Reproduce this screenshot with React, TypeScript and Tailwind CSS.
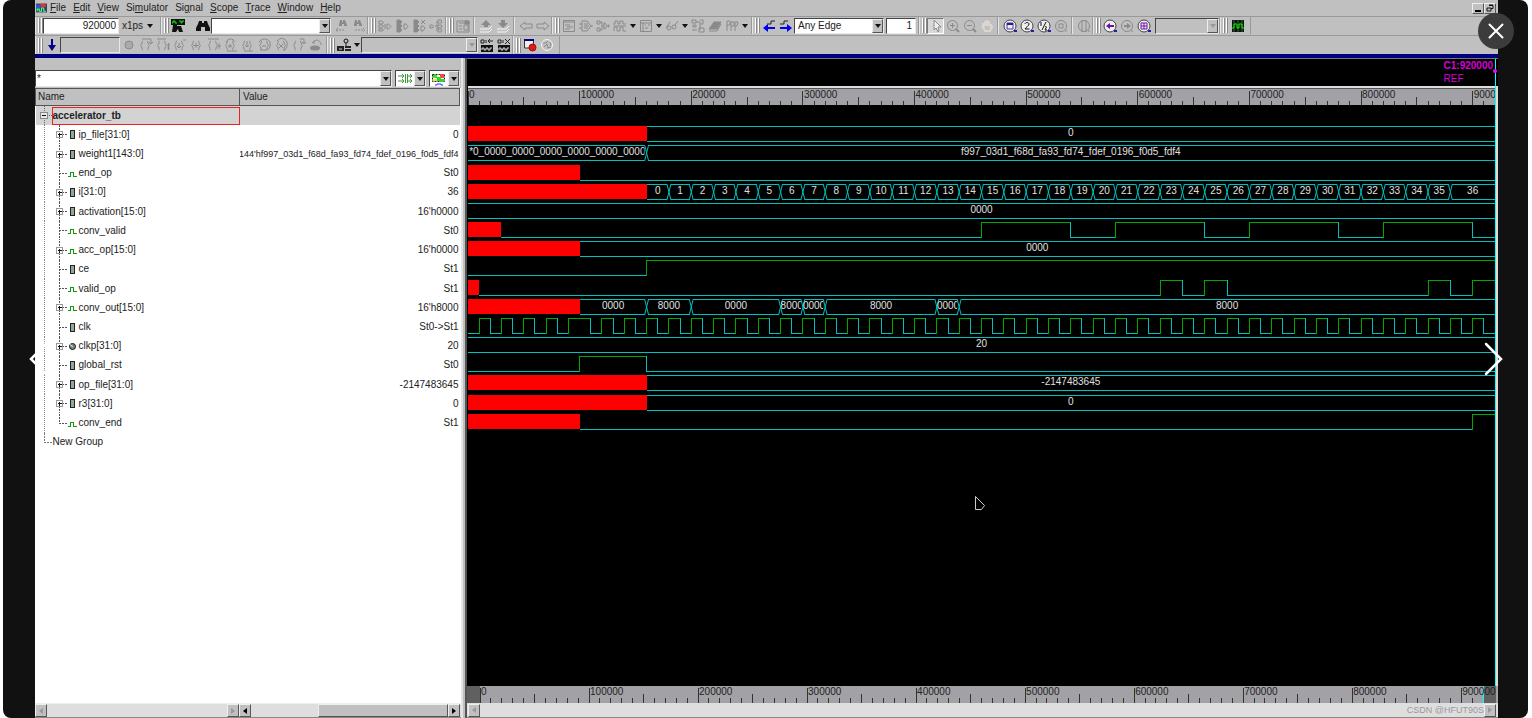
import type { ReactNode } from "react";

const END = 920;
const ROWS = 18;
const LIST_HEIGHT = 345;

const bevel =
  "border border-t-[#eee] border-l-[#eee] border-r-[#555] border-b-[#555] bg-[#c0c0c0]";
const sunken =
  "border-t border-l border-t-[#444] border-l-[#444] border-r border-b border-r-[#e8e8e8] border-b-[#e8e8e8]";

const pct = (t: number) => `${(t / END) * 100}%`;

/* ---------- toolbar icons ---------- */

const lens = (
  <>
    <circle cx="6.5" cy="6.5" r="5" />
    <path d="M10 10l3 3" strokeWidth="2" />
  </>
);

const binoculars = (
  <path
    d="M3 2h3v2h2V2h3l1 3 2 4v3H9V8H5v4H0V9l2-4z"
    fill="currentColor"
    stroke="none"
  />
);

const braces = (
  <path d="M4 3C2 3 4 6 1.500 7.500 4 9 2 12 4 12M8 3c2 0 0 3 2.500 4.500C8 9 10 12 8 12" />
);

const icons: Record<string, ReactNode> = {
  waves: (
    <>
      <path d="M0 0h14v6H0zM2 6h4v1h4l2 6H8l-1-3-2 3H1z" fill="#111" stroke="none" />
      <path d="M1 4h1V2h2v2h2M8 2h2v2h1V2h2" stroke="#0f0" />
    </>
  ),
  binoculars,
  findPrev: (
    <>
      <path d="M5 1h2v2h1V1h2l2 5v1H9V5H7v2H4V6z" fill="currentColor" stroke="none" />
      <path d="M1 11h9M3 9l-2 2 2 2" strokeDasharray="2 1" />
    </>
  ),
  findNext: (
    <>
      <path d="M3 1h2v2h1V1h2l2 5v1H7V5H5v2H2V6z" fill="currentColor" stroke="none" />
      <path d="M3 11h9M11 9l2 2-2 2" strokeDasharray="2 1" />
    </>
  ),
  drivers: <path d="M1 2h3l1.500 2L4 5H1zM1 6h3l1.500 1L4 9H1zM1 10h3l1.500 1L4 12H1zM7 5v5M9 5h1.500L13 7.500 10.500 10H9z" />,
  loads: (
    <>
      <path d="M2 1h3l2 2-2 2 2 2-2 2 2 2-2 2H2z" fill="currentColor" />
      <path d="M9 5h2l2 2.500L11 10H9z" />
    </>
  ),
  loadsX: (
    <>
      <path d="M2 1h3l2 2-2 2 2 2-2 2 2 2-2 2H2z" fill="currentColor" />
      <path d="M9 7h2l2 2-2 3H9zM9 1l4 4M13 1L9 5" />
    </>
  ),
  fanIn: <path d="M1 6h2l2 1.500L3 9H1zM6 7h2M8 2v10M9 1h3l1 2-1 1H9zM9 6h3l1 1-1 2H9zM9 10h3l1 1-1 2H9z" />,
  page: (
    <>
      <path d="M1 2h12v11H1zM3 4h6M3 7h3M3 10h3M8 6h4v5H8z" />
      <path d="M9 2h4v3H9z" fill="currentColor" />
    </>
  ),
  up: (
    <>
      <path d="M7 1l5 5H9v2H5V6H2z" fill="currentColor" stroke="none" />
      <path d="M1 10h9l3-3M1 13h9l3-3" stroke="#f4f4f4" />
    </>
  ),
  down: (
    <>
      <path d="M5 1h4v3h3L7 9 2 4h3z" fill="currentColor" stroke="none" />
      <path d="M1 10h9l3-3M1 13h9l3-3" stroke="#f4f4f4" />
    </>
  ),
  back: <path d="M1 7l5-4v2h7v4H6v2z" />,
  forward: <path d="M13 7L8 3v2H1v4h7v2z" />,
  source: <path d="M1.500 1.500h11v11h-11zM1 3h12M3 6h5M5 8h6M3 10h5" />,
  gate: (
    <path d="M3 2h5l4 5-4 5H3zM0 5h3M0 9h3M12 7h2M5 5h4M5 7h5M5 9h4" />
  ),
  path: <path d="M1 2h3v3H1zM1 9h3v3H1zM4 3h2v8H4M6 7h2M8 4h1l2 3-2 3H8zM12 6h1v2h-1z" />,
  wave: <path d="M0 5h2V2h3v3h2V2h3v3h3M1 12V8h3v4h3V8h3v4h3M1 7h12" />,
  list: <path d="M1.500 1.500h11v11h-11zM1 4h12M4 4v8M6 6h1M9 6h2M6 9h3" />,
  glasses: <path d="M1 9l4-6M4 7a2 2 0 1 0 0 4 2 2 0 0 0 0-4M9 6a2 2 0 1 0 0 4 2 2 0 0 0 0-4M10 6l3-4" />,
  schematic: <path d="M1 1h4v3H1zM2 6h3v2H2zM5 3h4v8M9 1h3v4H9M8 9h5v4H8zM1 11h5" />,
  book: (
    <>
      <path d="M1 10l5-7h7l-4 7z" fill="currentColor" />
      <path d="M1 12h8l4-7" />
    </>
  ),
  flags: <path d="M2 12V2M2 2h3v4H2M6 12V3h3v4H6M10 12V3h3l-1 4h-2" />,
  edgeLeft: (
    <>
      <path d="M5 5h4V2h4" stroke="#222" />
      <path d="M1 9l5-4v3h7v2H6v3z" fill="#0000f0" stroke="none" />
    </>
  ),
  edgeRight: (
    <>
      <path d="M1 5h4V2h4" stroke="#222" />
      <path d="M13 9L8 5v3H1v2h7v3z" fill="#0000f0" stroke="none" />
    </>
  ),
  pointer: <path d="M5 1v10l2-2 2 4 1-1-1-4h3z" fill="#eee" />,
  zoomIn: <g>{lens}<path d="M4 6.500h5M6.500 4v5" /></g>,
  zoomOut: <g>{lens}<path d="M4 6.500h5" /></g>,
  hand: (
    <path
      d="M3 8V4M5 7V2M7 7V1M9 7V2M11 9V5M3 8l2 4h5l2-4-1-2H4zM2 7l2 3"
      stroke="#dcd6cf"
      strokeWidth="2"
    />
  ),
  zoomFit: (
    <>
      <circle cx="7" cy="7" r="6" fill="#eee" stroke="#444" />
      <path d="M4 4h6v6H4z" stroke="#4a35b0" />
      <path d="M4 5h6" stroke="#2a1a90" strokeWidth="2" />
      <path d="M11 12h3" stroke="#2020a0" strokeWidth="2" />
    </>
  ),
  zoomTwo: (
    <>
      <circle cx="7" cy="7" r="6" fill="#eee" stroke="#444" />
      <path d="M5 5c0-2 4-2 4 0 0 2-3 3-4 5h4.500" stroke="#111" />
      <path d="M11 12h3" stroke="#2020a0" strokeWidth="2" />
    </>
  ),
  zoomHalf: (
    <>
      <circle cx="7" cy="7" r="6" fill="#eee" stroke="#444" />
      <path d="M4 3v4M9 3l-4 8M8 8c1-1 2 0 1 1l-1 2h2" stroke="#111" />
      <path d="M11 12h3" stroke="#2020a0" strokeWidth="2" />
    </>
  ),
  zoomRegion: (
    <>
      <circle cx="7" cy="7" r="5.500" />
      <path d="M5 5h4v4H5zM11 12h2" />
    </>
  ),
  zoomCursors: (
    <>
      <circle cx="7" cy="7" r="5.500" />
      <path d="M5 1v12M9 1v12M11 12h2" />
    </>
  ),
  zoomPrev: (
    <>
      <circle cx="7" cy="7" r="6" fill="#eee" stroke="#444" />
      <path d="M3 7l4-3v2h4v2H7v2z" fill="#6a12a8" stroke="none" />
      <path d="M11 12h3" stroke="#2020a0" strokeWidth="2" />
    </>
  ),
  zoomNext: (
    <>
      <circle cx="7" cy="7" r="5.500" />
      <path d="M11 7L7 4v2H4v2h3v2z" fill="currentColor" stroke="none" />
      <path d="M11 12h2" />
    </>
  ),
  zoomMark: (
    <>
      <circle cx="7" cy="7" r="6" fill="#eee" stroke="#444" />
      <path d="M4 4h6v6H4zM7 4v6M4 7h6" stroke="#6a12a8" />
      <path d="M11 12h3" stroke="#2020a0" strokeWidth="2" />
    </>
  ),
  grid: (
    <>
      <path d="M1 1h12v12H1z" fill="#111" stroke="none" />
      <path d="M3 1v12M7 1v12M11 1v12" stroke="#2b6b2b" />
      <path d="M1 9h2V5h3v4h2V5h3v4h2" stroke="#0f0" />
    </>
  ),
  arrowDown: (
    <path d="M6 1h2v6h3l-4 6-4-6h3z" fill="#00008c" stroke="none" />
  ),
  stop: <circle cx="7" cy="7" r="4" fill="#aaa" />,
  step1: <g>{braces}<path d="M3 1h9v5M10 4l2 2 2-2" /></g>,
  step2: <g>{braces}<path d="M1 1h9M11 7h3M11 10h3M12.500 5v7" /></g>,
  step3: <g>{braces}<path d="M6 5v5M4 8l2 2 2-2M10 2h3" /></g>,
  step4: <g>{braces}<path d="M6 5v5M3 7.500h6" /></g>,
  step5: <g>{braces}<path d="M1 1h11M12 5v6M10 8h4" /></g>,
  step6: <g>{braces}<path d="M2 4c2-4 7-4 9 0M6 6v4M4 8h4M3 13h10" /></g>,
  step7: <g>{braces}<path d="M6 3v6M4 7l2 2 2-2M3 13h9" /></g>,
  step8: <g>{braces}<path d="M1 4c2-4 9-4 11 0v5c-2 4-8 4-10 2M4 8h4" /></g>,
  step9: <g>{braces}<path d="M2 3c3-4 8-3 10 1v5l-3 4M4 6l4 4M8 6l-4 4" /></g>,
  step10: <g>{braces}<path d="M8 1h4v5M10 4l2 2 2-2" /></g>,
  undo: (
    <>
      <ellipse cx="6" cy="10" rx="5" ry="2.500" fill="currentColor" stroke="none" />
      <path d="M5 6V3l-2 2M5 3c3-2 7 0 7 4" />
    </>
  ),
  machine: (
    <>
      <path d="M0 8h7v5H0zM8 8h6v2H8zM8 11h6v2H8z" fill="#222" stroke="none" />
      <path d="M2 11h3" stroke="#ccc" />
      <circle cx="9" cy="3" r="2" />
      <path d="M9 5v3" stroke="#222" />
    </>
  ),
  bindA: (
    <>
      <path d="M1 7h12v7H1z" fill="#111" stroke="none" />
      <path d="M2 12v-2h2v2h2v-2h2v2h2v-2h2" stroke="#ddd" />
      <path d="M1 2h3v3H1zM6 2v3M13 3H8l2-2M8 3l2 2" stroke="#222" />
    </>
  ),
  bindX: (
    <>
      <path d="M1 7h12v7H1z" fill="#111" stroke="none" />
      <path d="M2 12v-2h2v2h2v-2h2v2h2v-2h2" stroke="#ddd" />
      <path d="M1 2h3v3H1zM6 2v3M8 1l5 5M13 1L8 6" stroke="#222" />
    </>
  ),
  record: (
    <>
      <path d="M1.500 2h9v8h-9z" fill="#eee" stroke="#333" />
      <path d="M1 2h10" stroke="#00008c" strokeWidth="2" />
      <circle cx="9.500" cy="9.500" r="3.500" fill="#e01818" stroke="#a01010" />
    </>
  ),
  clock: (
    <>
      <circle cx="7" cy="7" r="5.500" stroke="#f4f4f4" />
      <path d="M3 5h3l2-2M4 9l3-3 1 4 3-1M10 4l1 4" />
    </>
  ),
};

function Icon({ name }: { name: string }) {
  return (
    <svg
      viewBox="0 0 14 14"
      className="size-3.5"
      fill="none"
      stroke="currentColor"
      aria-hidden="true"
    >
      {icons[name]}
    </svg>
  );
}

function Tool({
  name,
  dim = false,
  pressed = false,
}: {
  name: string;
  dim?: boolean;
  pressed?: boolean;
}) {
  return (
    <button
      type="button"
      aria-label={name}
      className={`flex h-4 w-[17px] shrink-0 items-center justify-center ${
        dim ? "text-[#8a8a8a]" : "text-[#111]"
      } ${pressed ? "border border-t-[#777] border-l-[#777] border-r-white border-b-white bg-[#d8d8d8]" : ""}`}
    >
      <Icon name={name} />
    </button>
  );
}

function Tools({ names }: { names: string[] }) {
  return names.map((name) => <Tool key={name} name={name} dim />);
}

function Caret({ dim = false }: { dim?: boolean }) {
  return (
    <svg viewBox="0 0 6 4" className="h-1 w-1.5" aria-hidden="true">
      <path d="M0 0h6L3 4z" fill={dim ? "#999" : "#111"} />
    </svg>
  );
}

function More() {
  return (
    <button
      type="button"
      aria-label="More"
      className="flex h-4 w-[9px] items-center justify-center"
    >
      <Caret />
    </button>
  );
}

function Sep() {
  return <span className="mx-0.5 h-full w-0.5 border-r border-l border-r-[#e6e6e6] border-l-[#999]" />;
}

function Group({ children, className = "" }: { children: ReactNode; className?: string }) {
  return (
    <div
      className={`flex h-full shrink-0 items-center border-r border-l border-r-[#999] border-l-[#e6e6e6] ${className}`}
    >
      <span className="flex h-[15px] w-[7px] gap-px pl-0.5">
        <span className="w-0.5 border-r border-l border-r-[#888] border-l-white" />
        <span className="w-0.5 border-r border-l border-r-[#888] border-l-white" />
      </span>
      {children}
    </div>
  );
}

function Combo({
  label,
  options,
  className,
  dim = false,
}: {
  label: string;
  options: string[];
  className: string;
  dim?: boolean;
}) {
  return (
    <div className={`relative flex h-4 shrink-0 ${sunken} ${dim ? "bg-[#c0c0c0]" : "bg-white"} ${className}`}>
      <select
        aria-label={label}
        disabled={dim}
        className="w-full min-w-0 appearance-none pl-[3px] outline-none"
      >
        {options.map((option) => (
          <option key={option}>{option}</option>
        ))}
      </select>
      <span
        className={`pointer-events-none absolute inset-y-0 right-0 flex w-[11px] items-center justify-center ${bevel}`}
      >
        <Caret dim={dim} />
      </span>
    </div>
  );
}

/* ---------- menu and toolbars ---------- */

const menus: [string, string, string][] = [
  ["", "F", "ile"],
  ["", "E", "dit"],
  ["", "V", "iew"],
  ["Si", "m", "ulator"],
  ["Si", "g", "nal"],
  ["", "S", "cope"],
  ["", "T", "race"],
  ["", "W", "indow"],
  ["", "H", "elp"],
];

function MenuBar() {
  return (
    <nav className="flex h-[17px] items-center justify-between border-b border-[#999] pr-0.5">
      <div className="flex items-center gap-[7px]">
        <svg viewBox="0 0 10 10" className="-mr-1 size-3 pl-px" aria-hidden="true">
          <path d="M0 1h10v8H0z" fill="#345" />
          <path d="M0 2h4v3H0z" fill="#35d" />
          <path d="M4 1h5v3H4z" fill="#d34" />
          <path d="M1 8V6h2v2h2V5h2v3h2" stroke="#4f8" fill="none" />
        </svg>
        {menus.map(([before, key, after]) => (
          <button type="button" key={key}>
            {before}
            <span className="underline">{key}</span>
            {after}
          </button>
        ))}
      </div>
      <div className="flex">
        <button type="button" aria-label="Minimize" className={`flex h-[11px] w-3 items-end justify-center pb-px ${bevel}`}>
          <span className="h-0.5 w-1.5 bg-black" />
        </button>
        <button type="button" aria-label="Restore" className={`flex h-[11px] w-3 items-center justify-center ${bevel}`}>
          <svg viewBox="0 0 8 8" className="size-2" fill="none" stroke="#111" aria-hidden="true">
            <path d="M3 1.500h4v3H5M1 4h4v3H1zM3 1h4" />
          </svg>
        </button>
      </div>
    </nav>
  );
}

function Toolbars() {
  return (
    <>
      <div className="flex h-[19px] border-b border-[#999] pb-px">
        <Group>
          <input
            aria-label="Time"
            defaultValue="920000"
            className={`h-4 w-[76px] bg-white pr-0.5 text-right outline-none ${sunken}`}
          />
          <button type="button" className="flex w-[41px] items-center gap-1 pl-[3px]">
            x1ps <Caret />
          </button>
        </Group>
        <Group>
          <Tool name="waves" />
          <span className="w-2" />
          <Tool name="binoculars" />
          <Combo label="Find" options={[""]} className="mr-0.5 w-[120px]" />
          <Tools names={["findPrev", "findNext"]} />
        </Group>
        <Group className="pr-px">
          <Tools names={["drivers", "loads", "loadsX", "fanIn"]} />
        </Group>
        <Group>
          <Tools names={["page"]} />
          <Sep />
          <Tools names={["up", "down"]} />
          <Sep />
          <Tools names={["back", "forward"]} />
        </Group>
        <Group className="pr-0.5">
          <Tools names={["source", "gate", "path", "wave"]} />
          <More />
          <Tools names={["list"]} />
          <More />
          <Tools names={["glasses"]} />
          <More />
          <Tools names={["schematic", "book", "flags"]} />
          <More />
        </Group>
        <Group className="pr-0.5">
          <Tool name="edgeLeft" />
          <Tool name="edgeRight" />
          <Combo label="Edge" options={["Any Edge"]} className="mr-0.5 w-[90px]" />
          <input
            aria-label="Edge count"
            defaultValue="1"
            className={`h-4 w-[30px] bg-white pr-[3px] text-right outline-none ${sunken}`}
          />
        </Group>
        <Group>
          <Tool name="pointer" dim pressed />
          <Tools names={["zoomIn", "zoomOut", "hand"]} />
          <Sep />
          <Tool name="zoomFit" />
          <Tool name="zoomTwo" />
          <Tool name="zoomHalf" />
          <Tool name="zoomRegion" dim />
          <Sep />
          <Tool name="zoomCursors" dim />
        </Group>
        <Group>
          <Tool name="zoomPrev" />
          <Tool name="zoomNext" dim />
          <Tool name="zoomMark" />
          <Combo label="Zoom range" options={[""]} className="ml-[3px] w-16" dim />
        </Group>
        <Group className="pr-1">
          <span className="w-px" />
          <Tool name="grid" />
        </Group>
      </div>
      <div className="flex h-[18px]">
        <Group className="pr-0.5">
          <Tool name="arrowDown" />
          <input aria-label="Step" disabled className={`h-4 w-[60px] bg-[#c0c0c0] ${sunken}`} />
          <Tools
            names={[
              "stop",
              "step1",
              "step2",
              "step3",
              "step4",
              "step5",
              "step6",
              "step7",
              "step8",
              "step9",
              "step10",
              "undo",
            ]}
          />
        </Group>
        <Group>
          <Tool name="machine" />
          <More />
          <Combo label="Scope" options={[""]} className="w-[117px]" dim />
          <Tool name="bindA" />
          <Tool name="bindX" />
        </Group>
        <Group className="pr-1">
          <Tool name="record" />
          <Tool name="clock" dim />
        </Group>
      </div>
      <div className="h-1 bg-[#000080]" />
    </>
  );
}

/* ---------- signals ---------- */

type Kind = "reg" | "net" | "param";
type Level = "x" | "lo" | "hi";
type Seg = [from: number, value: string];

type Signal = {
  name: string;
  kind: Kind;
  value: string;
  bus?: boolean;
  // each segment runs until the next one starts, or to END
  wave: Seg[];
};

const counter: Seg[] = Array.from({ length: 37 }, (_, i) => [160 + i * 20, `${i}`]);

const clock: Seg[] = [
  [0, "lo"],
  ...[10, 30, 50, 70].flatMap((t): Seg[] => [
    [t, "hi"],
    [t + 10, "lo"],
  ]),
  [90, "hi"],
  [110, "lo"],
  ...Array.from({ length: 40 }, (_, i) => 120 + i * 20).flatMap((t): Seg[] => [
    [t, "hi"],
    [t + 10, "lo"],
  ]),
];

const weights = "f997_03d1_f68d_fa93_fd74_fdef_0196_f0d5_fdf4";

const signals: Signal[] = [
  { name: "ip_file[31:0]", kind: "reg", value: "0", bus: true, wave: [[0, "x"], [160, "0"]] },
  {
    name: "weight1[143:0]",
    kind: "reg",
    value: `144'h${weights}`,
    bus: true,
    wave: [[0, "*0_0000_0000_0000_0000_0000_0000"], [160, weights]],
  },
  { name: "end_op", kind: "net", value: "St0", wave: [[0, "x"], [100, "lo"]] },
  { name: "i[31:0]", kind: "reg", value: "36", bus: true, wave: [[0, "x"], ...counter] },
  { name: "activation[15:0]", kind: "reg", value: "16'h0000", bus: true, wave: [[0, "0000"]] },
  {
    name: "conv_valid",
    kind: "net",
    value: "St0",
    wave: [[0, "x"], [30, "lo"], [460, "hi"], [540, "lo"], [580, "hi"], [660, "lo"], [700, "hi"], [780, "lo"], [820, "hi"], [900, "lo"]],
  },
  { name: "acc_op[15:0]", kind: "net", value: "16'h0000", bus: true, wave: [[0, "x"], [100, "0000"]] },
  { name: "ce", kind: "reg", value: "St1", wave: [[0, "lo"], [160, "hi"]] },
  {
    name: "valid_op",
    kind: "net",
    value: "St1",
    wave: [[0, "x"], [10, "lo"], [620, "hi"], [640, "lo"], [660, "hi"], [680, "lo"], [860, "hi"], [880, "lo"], [900, "hi"]],
  },
  {
    name: "conv_out[15:0]",
    kind: "net",
    value: "16'h8000",
    bus: true,
    wave: [[0, "x"], [100, "0000"], [160, "8000"], [200, "0000"], [280, "8000"], [300, "0000"], [320, "8000"], [420, "0000"], [440, "8000"]],
  },
  { name: "clk", kind: "reg", value: "St0->St1", wave: clock },
  { name: "clkp[31:0]", kind: "param", value: "20", bus: true, wave: [[0, "20"]] },
  { name: "global_rst", kind: "reg", value: "St0", wave: [[0, "lo"], [100, "hi"], [160, "lo"]] },
  { name: "op_file[31:0]", kind: "reg", value: "-2147483645", bus: true, wave: [[0, "x"], [160, "-2147483645"]] },
  { name: "r3[31:0]", kind: "reg", value: "0", bus: true, wave: [[0, "x"], [160, "0"]] },
  { name: "conv_end", kind: "net", value: "St1", wave: [[0, "x"], [100, "lo"], [900, "hi"]] },
];

function Branch({ signal, last }: { signal: Signal; last: boolean }) {
  return (
    <svg width="43" height="19" fill="none" shapeRendering="crispEdges" aria-hidden="true">
      <path d="M8.500 0V19" stroke="#888" strokeDasharray="1 1" />
      <path d={last ? "M23.500 0V10M23 9.500H31" : "M23.500 0V19M23 9.500H31"} stroke="#555" strokeDasharray="2 1" />
      {signal.bus && (
        <>
          <rect x="20.500" y="6.500" width="6" height="6" fill="#fff" stroke="#999" />
          <path d="M22 9.500h4M23.500 8v4" stroke="#111" />
        </>
      )}
      {signal.kind === "reg" && (
        <rect x="34.500" y="5.500" width="4" height="8" fill="#8fa79c" stroke="#222" />
      )}
      {signal.kind === "net" && <path d="M32 12.500h2.500V8.500h3V12.500H41" stroke="#119911" />}
      {signal.kind === "param" && (
        <g shapeRendering="auto">
          <circle cx="36.500" cy="9.500" r="3" fill="#6f8f84" stroke="#111" />
          <path d="M36.500 9.500L34 7.500" stroke="#fff" />
        </g>
      )}
    </svg>
  );
}

function SignalTable() {
  return (
    <table className="h-[364px] w-full table-fixed border-collapse">
      <thead>
        <tr className="h-[17px] bg-[#c0c0c0] text-left">
          <th className="h-[17px] w-[204px] border border-[#555] p-0 pl-0.5 font-normal">Name</th>
          <th className="h-[17px] border border-[#555] p-0 pl-[3px] font-normal">Value</th>
        </tr>
      </thead>
      <tbody>
        <tr className="bg-[#d3d3d3]">
          <td className="p-0">
            <div className="flex items-center">
              <button type="button" aria-label="Collapse accelerator_tb">
                <svg width="16" height="19" className="block" shapeRendering="crispEdges">
                  <path d="M8.500 0V19M9 9.500H16" stroke="#666" strokeDasharray="1 1" />
                  <rect x="4.500" y="6.500" width="7" height="6" fill="#e8e8e8" stroke="#888" />
                  <path d="M6 9.500h4" stroke="#111" />
                </svg>
              </button>
              <div className="h-[18px] flex-1 border border-[#f02020] leading-4 font-bold">
                accelerator_tb
              </div>
            </div>
          </td>
          <td />
        </tr>
        {signals.map((signal, i) => (
          <tr key={signal.name}>
            <td className="p-0">
              <div className="flex items-center">
                {signal.bus ? (
                  <button type="button" aria-label={`Expand ${signal.name}`}>
                    <Branch signal={signal} last={false} />
                  </button>
                ) : (
                  <Branch signal={signal} last={i === signals.length - 1} />
                )}
                {signal.name}
              </div>
            </td>
            <td className="p-0">
              <div
                className={`flex justify-end overflow-hidden pr-px ${
                  signal.value.length > 40 ? "text-[9px]" : ""
                }`}
              >
                {signal.value}
              </div>
            </td>
          </tr>
        ))}
        <tr>
          <td className="p-0">
            <div className="flex items-center">
              <svg width="17" height="19" fill="none" shapeRendering="crispEdges" aria-hidden="true">
                <path d="M8.500 0V10M8 9.500H16" stroke="#777" strokeDasharray="2 1" />
              </svg>
              New Group
            </div>
          </td>
          <td />
        </tr>
      </tbody>
    </table>
  );
}

function ScrollArrow({ dir, dim = false }: { dir: "left" | "right"; dim?: boolean }) {
  return (
    <button
      type="button"
      aria-label={`Scroll ${dir}`}
      className={`flex h-[13px] w-3 shrink-0 items-center justify-center ${bevel}`}
    >
      <svg viewBox="0 0 4 6" className="h-1.5 w-1" aria-hidden="true">
        <path d={dir === "left" ? "M4 0v6L0 3z" : "M0 0v6l4-3z"} fill={dim ? "#999" : "#000"} />
      </svg>
    </button>
  );
}

function SignalPane() {
  return (
    <section className="flex w-[432px] shrink-0 bg-[#c0c0c0]">
      <div className="flex min-w-0 flex-1 flex-col">
        <div className="flex h-[30px] items-end gap-[3px] pb-px">
          <div className={`flex h-[17px] flex-1 bg-white ${sunken}`}>
            <input
              aria-label="Filter"
              defaultValue="*"
              className="min-w-0 flex-1 pl-px outline-none"
            />
            <button type="button" aria-label="Filter history" className={`flex w-[11px] items-center justify-center ${bevel}`}>
              <Caret />
            </button>
          </div>
          <button type="button" aria-label="Signal direction" className={`flex h-[17px] w-[31px] bg-white ${sunken}`}>
            <svg viewBox="0 0 18 15" className="h-[15px] w-[18px]" fill="none" stroke="#3a9a3a" aria-hidden="true">
              <path d="M2 5h6M2 10h6M6 3l2 2-2 2M6 8l2 2-2 2M9.500 3v9M11.500 3v9M12 5h4M12 10h4M14 3l2 2-2 2M14 8l2 2-2 2" />
            </svg>
            <span className={`flex h-full w-[11px] items-center justify-center ${bevel}`}>
              <Caret />
            </span>
          </button>
          <button type="button" aria-label="Signal type" className={`mr-px flex h-[17px] w-[31px] bg-white ${sunken}`}>
            <svg viewBox="0 0 18 15" className="h-[15px] w-[18px]" fill="none" aria-hidden="true">
              <path d="M2.500 3.500h12v7h-12z" stroke="#222" strokeDasharray="2 1" />
              <path d="M3 4h4v3H3z" fill="#2e2" />
              <path d="M10 3h4v4h-4z" fill="#f44" />
              <path d="M3 8h7v2H3z" fill="#ee2" />
              <path d="M7 6h4v4H7zM11 8h3v3h-3z" fill="#2d2" />
              <path d="M5 14h2v-1h4v1h2" stroke="#33f" />
            </svg>
            <span className={`flex h-full w-[11px] items-center justify-center ${bevel}`}>
              <Caret />
            </span>
          </button>
        </div>
        <div className="flex-1 bg-white pr-px">
          <SignalTable />
        </div>
        <div className="flex h-[15px] items-center border-t border-b border-t-[#eee] border-b-[#888] bg-[#dedede]">
          <div className="flex w-[204px] justify-between">
            <ScrollArrow dir="left" dim />
            <ScrollArrow dir="right" dim />
          </div>
          <div className="flex flex-1 pr-px">
            <ScrollArrow dir="left" />
            <span className="flex-1" />
            <span className={`h-[13px] w-[130px] ${bevel}`} />
            <ScrollArrow dir="right" />
          </div>
        </div>
      </div>
      <div className="w-1.5 border-r-2 border-l-2 border-r-[#555] border-l-[#e4e4e4] bg-[#c0c0c0]" />
    </section>
  );
}

/* ---------- waveforms ---------- */

const CYAN = "#00c0c0";
const GREEN = "#00a800";
const SWING = 15;

function Trace({ signal, y }: { signal: Signal; y: number }) {
  const low = y + SWING;
  const levelY = (level: string) => (level === "hi" ? y : low);
  return signal.wave.map(([from, value], i) => {
    const to = signal.wave[i + 1]?.[0] ?? END;
    const prev = signal.wave[i - 1]?.[1] as Level | undefined;
    if (value === "x") {
      return (
        <rect key={from} x={pct(from)} y={y} width={pct(to - from)} height={SWING} fill="#f00" />
      );
    }
    if (signal.bus) {
      return (
        <g key={from} stroke={CYAN}>
          <line x1={pct(from)} x2={pct(to)} y1={y + 0.5} y2={y + 0.5} />
          <line x1={pct(from)} x2={pct(to)} y1={low + 0.5} y2={low + 0.5} />
          {prev && prev !== "x" && (
            <svg x={pct(from)} y={y} overflow="visible" shapeRendering="auto">
              <rect x="-2" y="0" width="4" height="16" fill="#000" stroke="none" />
              <path d="M-2 0L2 16M2 0L-2 16" />
            </svg>
          )}
          <text
            x={pct((from + to) / 2)}
            y={y + 10}
            textAnchor="middle"
            fill="#e0e0e0"
            stroke="none"
          >
            {value}
          </text>
        </g>
      );
    }
    return (
      <g key={from} stroke={value === "hi" ? GREEN : CYAN}>
        {prev && prev !== "x" && (
          <line x1={pct(from)} x2={pct(from)} y1={y} y2={low + 1} />
        )}
        <line x1={pct(from)} x2={pct(to)} y1={levelY(value) + 0.5} y2={levelY(value) + 0.5} />
      </g>
    );
  });
}

function Ruler({ className }: { className: string }) {
  const ticks = Array.from({ length: 92 }, (_, i) => i * 10);
  return (
    <svg className={className} shapeRendering="crispEdges" role="img" aria-label="Time ruler">
      {ticks.map((t) => (
        <line
          key={t}
          x1={pct(t)}
          x2={pct(t)}
          y1={t % 100 === 0 ? 2 : t % 50 === 0 ? 8 : 12}
          y2="17"
          stroke="#333"
        />
      ))}
      {ticks
        .filter((t) => t % 100 === 0)
        .map((t) => (
          <text key={t} x={pct(t)} dx="1" y="9" fill="#222">
            {t * 1000}
          </text>
        ))}
    </svg>
  );
}

function WavePane() {
  return (
    <section className="flex min-w-0 flex-1 flex-col border-t border-[#777] bg-black">
      <div className="flex min-h-0 flex-1">
        <div className="flex min-w-0 flex-1 flex-col border-r border-[#00ffff] pl-px">
          <div className="flex h-[27px] justify-end pr-0.5 leading-[13px] text-[#d800d8]">
            <div>
              <div className="font-bold">C1:920000</div>
              <div>REF</div>
            </div>
          </div>
          <div className="h-[19px] border-t-2 border-[#ddd] bg-[#555] pt-px">
            <Ruler className="block h-4 w-full bg-[#a2a1a6]" />
          </div>
          <svg className="w-full flex-1" shapeRendering="crispEdges" role="img" aria-label="Waveforms">
            {signals.map((signal, i) => (
              <Trace
                key={signal.name}
                signal={signal}
                y={Math.round(((i + 1) * LIST_HEIGHT) / ROWS) + 2}
              />
            ))}
          </svg>
        </div>
        <div className="mt-[27px] w-0.5 bg-[#ddd]" />
      </div>
      <div className="flex h-[17px] bg-[#a2a1a6] pr-0.5">
        <div className="w-[13px] bg-[#606060]" />
        <Ruler className="relative h-[17px] min-w-0 flex-1 overflow-visible" />
        <div className="w-[13px] border-l border-[#00ffff] bg-[#606060]" />
      </div>
      <div className="flex h-[15px] items-center justify-between border-b border-[#888] bg-[#dedede] pr-0.5 pl-px">
        <ScrollArrow dir="left" dim />
        <span className="ml-auto text-[9px] text-[#999]">CSDN @HFUT90S</span>
        <ScrollArrow dir="right" dim />
      </div>
    </section>
  );
}

function Chevron({ d }: { d: string }) {
  return (
    <svg
      viewBox="0 0 20 34"
      className="h-[34px] w-5"
      fill="none"
      stroke="#fff"
      strokeWidth="2.500"
      strokeLinecap="round"
      aria-hidden="true"
    >
      <path d={d} />
    </svg>
  );
}

export default function App() {
  return (
    <div className="h-screen bg-white pr-1 pl-[3px]">
      <div className="relative h-full rounded-lg bg-[#111] pr-[30px] pl-8">
        <main className="flex h-full flex-col overflow-hidden bg-[#c0c0c0] font-['Liberation_Sans',Arial,sans-serif] text-[10px] leading-3 text-[#222]">
          <MenuBar />
          <Toolbars />
          <div className="flex min-h-0 flex-1">
            <SignalPane />
            <WavePane />
          </div>
        </main>

        <svg
          viewBox="0 0 12 16"
          className="absolute top-[495px] left-[971px] h-4 w-3"
          fill="#000"
          stroke="#ccc"
          aria-hidden="true"
        >
          <path d="M1.500 1.500v13h6l3-4z" />
        </svg>
        <span className="absolute top-[69px] right-[31px] size-1 rounded-full bg-[#f0f]" />
        <button
          type="button"
          aria-label="Close"
          className="absolute top-[13px] right-3.5 flex size-9 items-center justify-center rounded-full bg-[#3c3c3c]"
        >
          <svg viewBox="0 0 16 16" className="size-4" stroke="#fff" strokeWidth="2" strokeLinecap="round">
            <path d="M1.500 1.500l13 13M14.500 1.500l-13 13" />
          </svg>
        </button>
        <button type="button" aria-label="Previous" className="absolute top-1/2 left-[25px] -translate-y-1/2">
          <Chevron d="M18 2L3 17l15 15" />
        </button>
        <button type="button" aria-label="Next" className="absolute top-1/2 right-6 -translate-y-1/2">
          <Chevron d="M2 2l15 15L2 32" />
        </button>
      </div>
    </div>
  );
}
